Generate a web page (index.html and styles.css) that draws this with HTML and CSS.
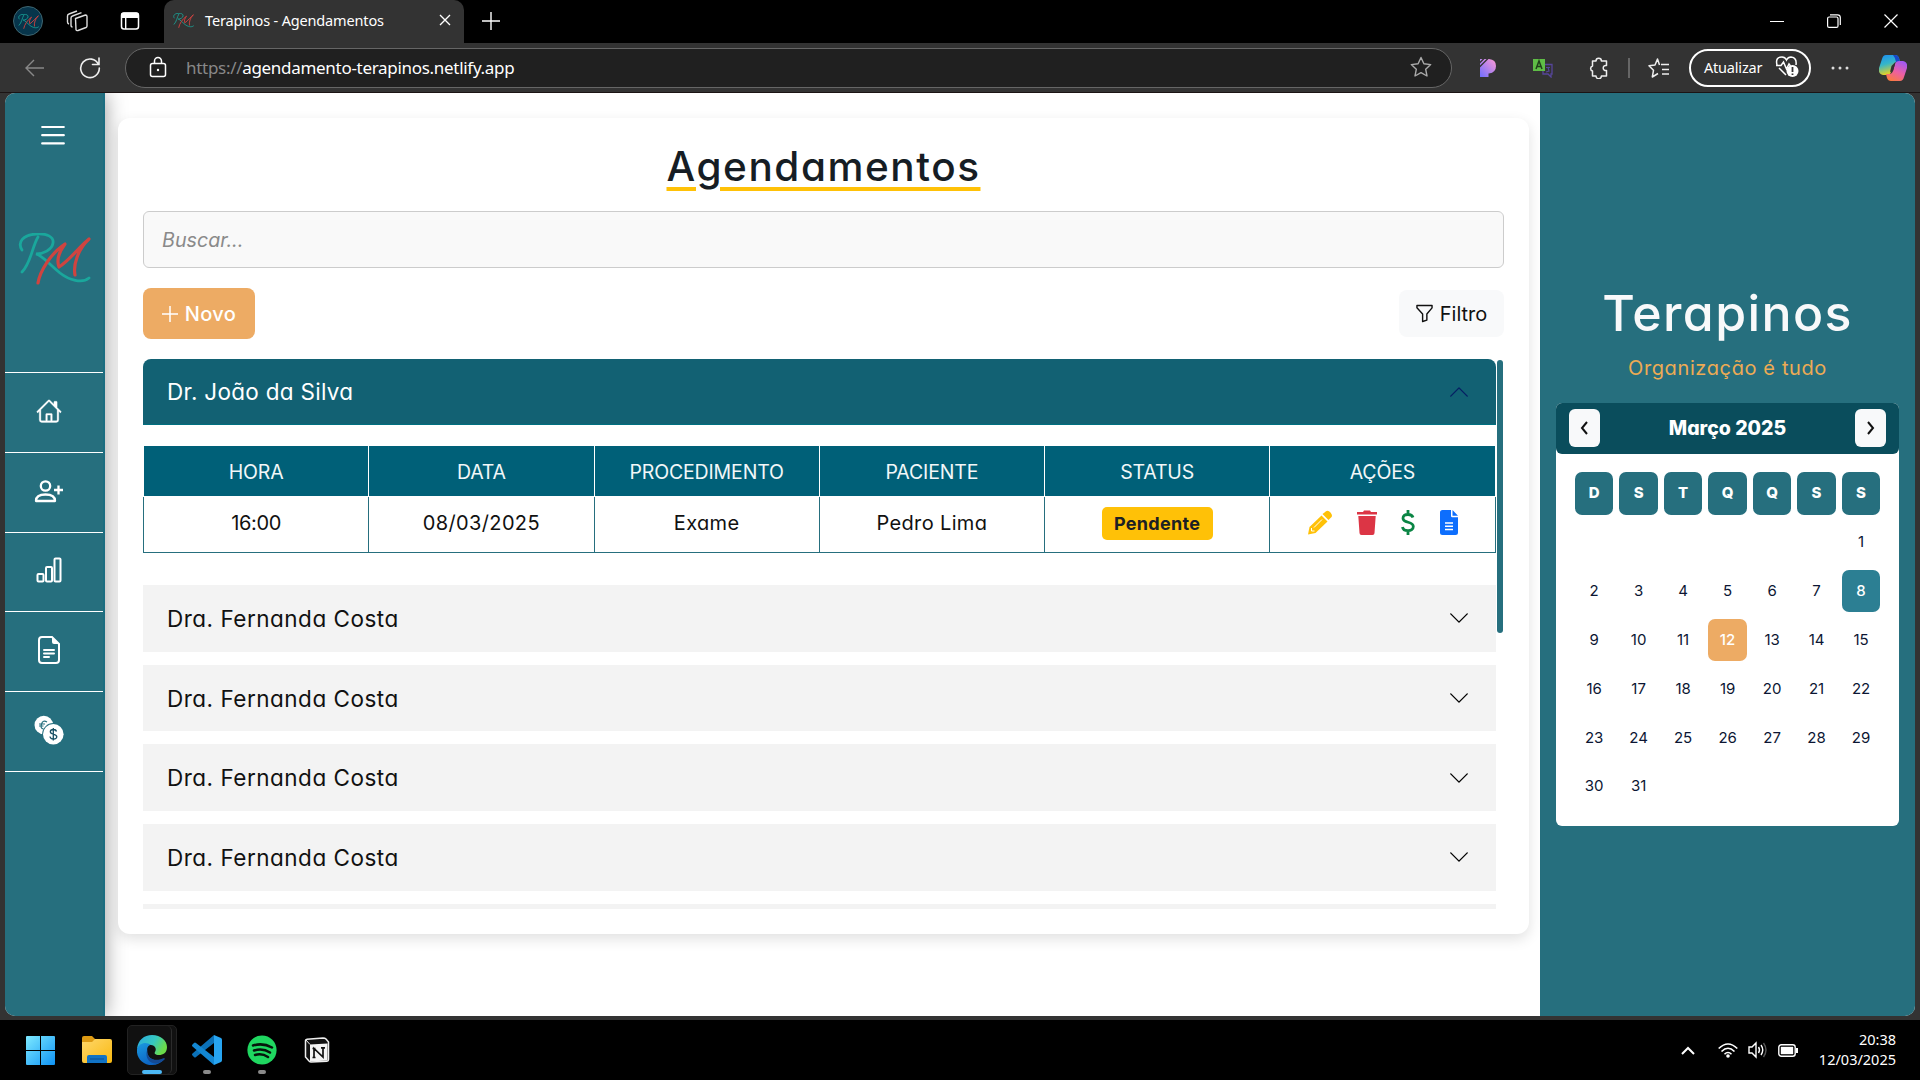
FILE: index.html
```html
<!DOCTYPE html>
<html lang="pt-BR">
<head>
<meta charset="utf-8">
<title>Terapinos - Agendamentos</title>
<link rel="stylesheet" href="styles.css">
</head>
<body>
<svg class="defs" aria-hidden="true">
  <defs>
    <symbol id="rm" viewBox="0 0 73 52" overflow="visible">
      <path d="M4 17C-1 9 5 2 18 1c11-1 18 3 17 9-1 7-10 11-17 11 7 2 13 10 24 19 9 7 22 11 29 5M20 4C14 14 13 30 4 39" fill="none" stroke="#1aa79c" stroke-width="2.8" stroke-linecap="round"/>
      <path d="M20 50C22 38 33 20 47 11 41 19 38 26 41 34 52 27 62 13 71 6 60 16 55 32 57 42" fill="none" stroke="#cf4440" stroke-width="3.2" stroke-linecap="round" stroke-linejoin="round"/>
    </symbol>
    <symbol id="down" viewBox="0 0 16 16"><path fill-rule="evenodd" d="M1.646 4.646a.5.5 0 0 1 .708 0L8 10.293l5.646-5.647a.5.5 0 0 1 .708.708l-6 6a.5.5 0 0 1-.708 0l-6-6a.5.5 0 0 1 0-.708z"/></symbol>
  </defs>
</svg>

<header class="tabs">
  <span class="avatar"><svg width="21" height="15"><use href="#rm"/></svg></span>
  <svg class="i-collections" width="22" height="22" viewBox="0 0 22 22" fill="none" stroke="#ddd" stroke-width="1.4" stroke-linejoin="round"><path d="M9.5 8.5l10-3.5q1.500 0 1.500 1.500v9.500q0 1-1 1.500l-8 3q-1.500.5-2-.8z"/><path d="M6.500 17q-1.500 0-1.500-2V8q0-1.500 1.500-2l9-3.300M3 14q-1.500-.5-1.500-2V6q0-1.500 1.500-2l8-3"/></svg>
  <svg class="i-panes" width="20" height="20" viewBox="0 0 20 20"><rect x="1.500" y="2" width="17" height="16" rx="2.500" fill="none" stroke="#fff" stroke-width="1.500"/><path d="M1 7V4q0-2.500 2.500-2.500h13Q19 1.500 19 4v3zM5 7h1.400v11H5z" fill="#fff"/></svg>
  <div class="tab">
    <svg width="21" height="15"><use href="#rm"/></svg>
    <span class="tab-title">Terapinos - Agendamentos</span>
    <svg width="12" height="12" viewBox="0 0 12 12" stroke="#fff" stroke-width="1.400"><path d="M1 1l10 10M11 1L1 11"/></svg>
  </div>
  <svg class="i-plus" width="18" height="18" viewBox="0 0 18 18" stroke="#fff" stroke-width="1.400"><path d="M9 0v18M0 9h18"/></svg>
  <div class="window">
    <svg width="14" height="14" viewBox="0 0 14 14" stroke="#fff"><path d="M0 7.500h14"/></svg>
    <svg width="14" height="14" viewBox="0 0 14 14" fill="none" stroke="#fff" stroke-width="1.200"><rect x=".6" y="3" width="10.400" height="10.400" rx="1.500"/><path d="M3 .8h7.500q2.800 0 2.800 2.800V11"/></svg>
    <svg width="14" height="14" viewBox="0 0 14 14" stroke="#fff" stroke-width="1.200"><path d="M.5.5l13 13M13.500.5l-13 13"/></svg>
  </div>
</header>

<nav class="toolbar">
  <svg class="i-back" width="19" height="18" viewBox="0 0 19 18" fill="none" stroke="#888" stroke-width="1.400"><path d="M19 9H1M9 1L1 9l8 8"/></svg>
  <svg class="i-reload" width="22" height="22" viewBox="0 0 22 22" fill="none" stroke="#eee" stroke-width="1.600"><path d="M19.500 7.500A9.300 9.300 0 1 0 20.300 11M20 1v6.500h-6.500" stroke-linecap="round"/></svg>
  <div class="address">
    <svg width="18" height="22" viewBox="0 0 18 22" fill="none" stroke="#fff" stroke-width="1.500"><rect x="1.500" y="7.500" width="15" height="13" rx="2"/><path d="M5.500 7.500V5a3.500 3.500 0 0 1 7 0v2.500"/><circle cx="9" cy="14" r="1.200" fill="#fff" stroke="none"/></svg>
    <span class="url"><i>https://</i>agendamento-terapinos.netlify.app</span>
    <svg class="i-star" width="22" height="22" viewBox="0 0 22 22" fill="none" stroke="#aaa" stroke-width="1.400" stroke-linejoin="round"><path d="M11 1.500l2.900 6.200 6.800.9-5 4.700 1.300 6.700-6-3.300-6 3.300 1.300-6.700-5-4.700 6.800-.9z"/></svg>
  </div>
  <svg class="i-p" width="18" height="20" viewBox="0 0 18 20"><defs><linearGradient id="pg" x1="1" x2="0" y2="1"><stop stop-color="#ff9ad5"/><stop offset="1" stop-color="#6f6dff"/></linearGradient></defs><path d="M1 1h9q7 .5 7 7t-7 7.500H9.500V19H1z" fill="url(#pg)"/><path d="M0 5.500L5.500 0M0 9.500L9.500 0" stroke="#333" stroke-width="1.300"/></svg>
  <svg class="i-translate" width="20" height="20" viewBox="0 0 20 20"><path d="M12 6.500h7V16h-1v3l-3-3h-5v-3.500" fill="none" stroke="#56469a" stroke-width="1.300"/><rect x="0" y="1" width="12" height="12" fill="#5fbd46"/><path d="M3 11l3-8 3 8M4 8.500h4" fill="none" stroke="#20401a" stroke-width="1.500"/><path d="M13 9.500h4M15 9l1 4-3 1" fill="none" stroke="#56469a" stroke-width="1.200"/></svg>
  <svg class="i-puzzle" width="20" height="22" viewBox="0 0 20 22" fill="none" stroke="#eee" stroke-width="1.500" stroke-linejoin="round"><path d="M3.500 4H7a2.700 2.700 0 0 1 5.400 0H17.500V8.500a2.600 2.600 0 1 0 0 5V19h-5.100a2.700 2.700 0 0 1-5.400 0H3.500v-5a2.600 2.600 0 0 1 0-5z"/></svg>
  <span class="divider"></span>
  <svg class="i-favs" width="22" height="22" viewBox="0 0 22 22" fill="none" stroke="#eee" stroke-width="1.500" stroke-linejoin="round"><path d="M13 7.500h8M14 12.500h7M14 17h7M11.500 8L9.500 2 7 8l-6 .8 4.500 4.500L4.300 20 10 16.500"/></svg>
  <div class="update"><span>Atualizar</span>
    <svg width="24" height="22" viewBox="0 0 24 22" fill="none" stroke="#fff" stroke-width="1.500"><path d="M2 9q-2-8 5-8 3 0 4.500 3Q13 1 16 1q6 .5 5 8M1 9.500h5L8.500 6l3 7 2.500-5 1.500 2M4 12l7 7"/><circle cx="17.500" cy="15" r="6" fill="#fff" stroke="none"/><path d="M17.500 11v5M17.500 17.500v1.500" stroke="#333" stroke-width="1.800"/></svg>
  </div>
  <svg class="i-dots" width="18" height="4" viewBox="0 0 18 4" fill="#ddd"><circle cx="2" cy="2" r="1.500"/><circle cx="9" cy="2" r="1.500"/><circle cx="16" cy="2" r="1.500"/></svg>
  <svg class="i-copilot" width="28" height="28" viewBox="0 0 28 28"><defs><linearGradient id="ca" x2=".3" y2="1"><stop stop-color="#1c8df2"/><stop offset=".5" stop-color="#35b6c8"/><stop offset="1" stop-color="#e8d021"/></linearGradient><linearGradient id="cb" x1=".7" x2=".2" y2="1"><stop stop-color="#a259f0"/><stop offset=".5" stop-color="#ec5fa4"/><stop offset="1" stop-color="#fb7b3b"/></linearGradient></defs><path d="M7 1h9q3 0 4 3l1 4h-3q-3 0-4 3l-2 7q-1 3-4 3H4q-5-1-4-7l3-9Q4 1 7 1z" fill="url(#ca)"/><path d="M14 1h2q3 0 4 3l1 4h-4q-1-5-3-7z" fill="#1748c8"/><path d="M21 27h-9q-3 0-4-3l-1-4h3q3 0 4-3l2-7q1-3 4-3h4q5 1 4 7l-3 9q-1 4-4 4z" fill="url(#cb)"/><path d="M12.500 12L11 18l3-1 2-7q-2.500 0-3.500 2z" fill="#333"/></svg>
</nav>

<main class="page">
  <aside class="sidebar">
    <svg class="burger" width="24" height="20" viewBox="0 0 24 20" stroke="#fff" stroke-width="2.200" stroke-linecap="round"><path d="M1.200 2h21.600M1.200 10.200h21.600M1.200 18.400h21.600"/></svg>
    <svg class="logo" width="73" height="52"><use href="#rm"/></svg>
    <ul class="menu">
      <li><svg width="26" height="26" viewBox="0 0 16 16"><path d="M8.707 1.500a1 1 0 0 0-1.414 0L.646 8.146a.5.5 0 0 0 .708.708L2 8.207V13.500A1.500 1.500 0 0 0 3.500 15h9a1.500 1.500 0 0 0 1.500-1.500V8.207l.646.647a.5.5 0 0 0 .708-.708L13 5.793V2.500a.5.5 0 0 0-.5-.5h-1a.5.5 0 0 0-.5.5v1.293zM13 7.207V13.500a.5.5 0 0 1-.5.5H10v-4a.5.5 0 0 0-.5-.5h-3a.5.5 0 0 0-.5.500v4H3.500a.5.5 0 0 1-.5-.5V7.207l5-5zM7 14v-3.500h2V14z" stroke="#fff" stroke-width=".2"/></svg></li>
      <li><svg width="30" height="24" viewBox="0 0 30 24" fill="none" stroke="#fff" stroke-width="2.300" stroke-linejoin="round"><circle cx="11.500" cy="7" r="4.700"/><path d="M2 22q0-6.500 9.500-6.500T21 22zM24.500 6.500v9M20 11h9"/></svg></li>
      <li><svg width="26" height="26" viewBox="0 0 26 26" fill="none" stroke="#fff" stroke-width="2"><rect x="1.500" y="17" width="6" height="7.500" rx="1"/><rect x="10" y="10" width="6" height="14.500" rx="1"/><rect x="18.500" y="1.500" width="6" height="23" rx="1"/></svg></li>
      <li><svg width="22" height="28" viewBox="0 0 22 28" fill="none" stroke="#fff" stroke-width="2"><path d="M14 1H4Q1 1 1 4v20q0 3 3 3h14q3 0 3-3V8z"/><path d="M14 1v5q0 2 2 2h5z" fill="#fff" stroke="none"/><path d="M6 14h10M6 17.500h10M6 21h5" stroke-linecap="round"/></svg></li>
      <li><svg width="30" height="30" viewBox="0 0 30 30"><circle cx="9.800" cy="10" r="9.300" fill="#fff"/><circle cx="19.300" cy="19.300" r="11.200" fill="#266f7e"/><circle cx="19.300" cy="19.300" r="10.300" fill="#fff"/><path d="M13 7Q9 4.500 7.500 9T9.500 14M5 9h6M5 11h4.500" fill="none" stroke="#266f7e" stroke-width="1.200"/><path d="M22.500 16.500q-.5-2-3.200-2-3 0-3 2.300c0 3.500 6.500 1.500 6.500 5 0 3.200-6.500 3-6.800-.3M19.300 13v12.500" fill="none" stroke="#174f63" stroke-width="1.300"/></svg></li>
    </ul>
  </aside>

  <section class="content">
    <div class="card">
      <h1><span>Agendamentos</span></h1>
      <div class="search">Buscar...</div>
      <div class="actions">
        <button class="new"><svg width="16" height="16" viewBox="0 0 16 16" stroke="#fff" stroke-width="1.500"><path d="M8 0v16M0 8h16"/></svg><span>Novo</span></button>
        <button class="filter"><svg width="17" height="19" viewBox="0 0 18 19" fill="none" stroke="#111" stroke-width="1.500" stroke-linejoin="round"><path d="M1 1h16v2.500l-5.500 6.500v6.500L7 18v-8L1 3.500z"/></svg><span>Filtro</span></button>
      </div>
      <div class="scroller">
        <div class="list">
          <div class="item open"><span>Dr. João da Silva</span><svg width="22" height="22"><use href="#down"/></svg></div>
          <table>
            <thead><tr><th>HORA</th><th>DATA</th><th>PROCEDIMENTO</th><th>PACIENTE</th><th>STATUS</th><th>AÇÕES</th></tr></thead>
            <tbody><tr><td class="time">16:00</td><td>08/03/2025</td><td>Exame</td><td>Pedro Lima</td><td><span class="badge">Pendente</span></td>
              <td><div class="ops">
                <svg width="25" height="25" viewBox="0 0 25 25"><path d="M17.500 2.500q3-3.500 6 0t0 5.500l-2 2-6-6z" fill="#ffc107"/><path d="M14.500 5.500l6 6L8.500 23 1 24.500 2.500 17z" fill="#ffc107"/><path d="M15 9.500L7 17.500M4.500 18v3h3" stroke="#fff" stroke-width="1" fill="none"/></svg>
                <svg width="20" height="25" viewBox="0 0 20 25" fill="#dc3545"><path d="M0 2h6l1-1.500h6L14 2h6v2.500H0zM1.300 6h17.400l-1.200 17q0 2-2 2h-11q-2 0-2-2z"/></svg>
                <svg width="14" height="25" viewBox="0 0 14 25" fill="none" stroke="#0a8544" stroke-width="2.800"><path d="M12 7.500Q11 4.500 7 4.500q-5 0-5 3.700c0 5.300 10.300 2.800 10.300 8.300 0 5.500-10 5.500-10.800.5M7 0v4.500M7 20.500V25"/></svg>
                <svg width="18" height="25" viewBox="0 0 18 25"><path d="M2.500 0H11v6q0 1.200 1.200 1.200H18V22.500Q18 25 15.500 25h-13Q0 25 0 22.500v-20Q0 0 2.500 0zM12.500 0L18 5.800h-5.500z" fill="#0d6efd"/><path d="M5 13h8M5 16.200h8M5 19.500h8" stroke="#fff" stroke-width="1.500"/></svg>
              </div></td></tr></tbody>
          </table>
          <div class="item"><span>Dra. Fernanda Costa</span><svg width="22" height="22"><use href="#down"/></svg></div>
          <div class="item"><span>Dra. Fernanda Costa</span><svg width="22" height="22"><use href="#down"/></svg></div>
          <div class="item"><span>Dra. Fernanda Costa</span><svg width="22" height="22"><use href="#down"/></svg></div>
          <div class="item"><span>Dra. Fernanda Costa</span><svg width="22" height="22"><use href="#down"/></svg></div>
          <div class="item"></div>
        </div>
        <div class="track"><div class="thumb"></div></div>
      </div>
    </div>
  </section>

  <aside class="panel">
    <h2>Terapinos</h2>
    <p>Organização é tudo</p>
    <div class="calendar">
      <div class="cal-head">
        <button><svg width="9" height="14" viewBox="0 0 9 14"><path d="M7 1L2 7l5 6"/></svg></button>
        <strong>Março 2025</strong>
        <button><svg width="9" height="14" viewBox="0 0 9 14"><path d="M2 1l5 6-5 6"/></svg></button>
      </div>
      <div class="week"><b>D</b><b>S</b><b>T</b><b>Q</b><b>Q</b><b>S</b><b>S</b></div>
      <div class="days">
        <span class="first">1</span>
        <span>2</span><span>3</span><span>4</span><span>5</span><span>6</span><span>7</span><span class="booked">8</span>
        <span>9</span><span>10</span><span>11</span><span class="today">12</span><span>13</span><span>14</span><span>15</span>
        <span>16</span><span>17</span><span>18</span><span>19</span><span>20</span><span>21</span><span>22</span>
        <span>23</span><span>24</span><span>25</span><span>26</span><span>27</span><span>28</span><span>29</span>
        <span>30</span><span>31</span>
      </div>
    </div>
  </aside>
</main>

<footer class="taskbar">
  <svg class="t-win" width="29" height="29" viewBox="0 0 29 29"><defs><linearGradient id="wg" x2="1" y2="1"><stop stop-color="#7eeaff"/><stop offset="1" stop-color="#0f93f5"/></linearGradient></defs><path d="M0 1q0-1 1-1h13v14H0zM15 0h13q1 0 1 1v13H15zM0 15h14v14H1q-1 0-1-1zM15 15h14v13q0 1-1 1H15z" fill="url(#wg)"/></svg>
  <svg class="t-folder" width="30" height="28" viewBox="0 0 30 28"><defs><linearGradient id="fg" x2="1" y2="1"><stop stop-color="#ffd76a"/><stop offset="1" stop-color="#f9b911"/></linearGradient></defs><path d="M0 2q0-2 2-2h8l3 3v6H0z" fill="#dd9a13"/><path d="M0 6h10l3-3h15q2 0 2 2v20q0 2-2 2H2q-2 0-2-2z" fill="url(#fg)"/><path d="M5 27v-6q0-2 2-2h16q2 0 2 2v6z" fill="#1173c5"/><path d="M8 23h14" stroke="#0a4f93"/></svg>
  <div class="t-edge"><div>
    <svg width="30" height="30" viewBox="0 0 30 30"><defs><linearGradient id="ea" x2="1" y2=".4"><stop stop-color="#2aa8e0"/><stop offset=".6" stop-color="#36c9c0"/><stop offset="1" stop-color="#6bdc4a"/></linearGradient><linearGradient id="eb" x2=".6" y2="1"><stop stop-color="#1b9ae0"/><stop offset="1" stop-color="#0b5fc0"/></linearGradient></defs><path d="M0 14C1 5 7 0 15 0c9 0 15 6 15 12 0 6-4 8-8 8-4 0-5-2-4-3 2-3 0-7-4-7C7 9 2 10 0 14z" fill="url(#ea)"/><path d="M0 14C2 8 9 6 14 10c-4 0-5 6-3 10 3 6 10 6 16 4-3 4-7 6-12 6C6 30-1 23 0 14z" fill="url(#eb)"/><path d="M11 13c-3 9 5 15 16 10 1 0 1 1 0 2-9 8-22 1-16-12z" fill="#144a94"/></svg>
    <em></em></div></div>
  <div class="t-app t-code"><svg width="30" height="30" viewBox="0 0 30 30"><path d="M22 8L4 22q-1 1-2 0l-1.500-1.500q-1-1 0-2L22 0z" fill="#0b71b8"/><path d="M22 22L4 8Q3 7 2 8L.5 9.500q-1 1 0 2L22 30z" fill="#1387d2"/><path d="M22 0l7 3q1 .5 1 2v20q0 1.500-1 2l-7 3z" fill="#27a5f2"/></svg><em></em></div>
  <div class="t-app t-spot"><svg width="30" height="30" viewBox="0 0 30 30"><circle cx="15" cy="15" r="14.600" fill="#1fd760"/><path d="M6 10.500q10-3 19 2M7 15.500q9-2.500 16 2M8 20q7-2 13 2" fill="none" stroke="#06150b" stroke-width="2.500" stroke-linecap="round"/></svg><em></em></div>
  <svg class="t-notion" width="26" height="26" viewBox="0 0 26 26"><path d="M1.500 3.500q0-1 1.500-1.200L19 1q2 0 3 1l2.500 3v17.500q0 1.700-1.500 1.700L7 25q-1 0-2-1l-3.500-4z" fill="#111" stroke="#eee" stroke-width="1.500"/><path d="M6 7.500l17.500-1v17L6 24.500z" fill="#f4f4f4"/><path d="M2 3l4 4.500" stroke="#eee"/><path d="M10 20.500v-9l9 8.500v-9M8.500 11.500h3M17 10.800h4M8.500 20.500h3" stroke="#111" stroke-width="1.700" fill="none"/></svg>
  <div class="tray">
    <svg class="y-up" width="14" height="9" viewBox="0 0 14 9" fill="none" stroke="#fff" stroke-width="2"><path d="M1 8l6-6 6 6"/></svg>
    <svg class="y-wifi" width="20" height="15" viewBox="0 0 20 15" fill="none" stroke="#fff" stroke-width="1.600"><path d="M.7 5.500q9.300-9 18.600 0M3.500 8.500q6.500-6.500 13 0M6.500 11.200q3.500-3.500 7 0"/><circle cx="10" cy="13" r="1.800" fill="#fff" stroke="none"/></svg>
    <svg class="y-vol" width="20" height="18" viewBox="0 0 20 18" fill="none" stroke="#fff" stroke-width="1.400"><path d="M1 6h3l4-4v14l-4-4H1zM10.500 6q2 3 0 6M13 4q3.500 5 0 10"/><path d="M15.500 2q5 7 0 14" stroke="#555"/></svg>
    <svg class="y-bat" width="20" height="13" viewBox="0 0 20 13"><rect x=".8" y=".8" width="16.400" height="11.400" rx="2.500" fill="none" stroke="#fff" stroke-width="1.400"/><rect x="2.800" y="2.800" width="12.400" height="7.400" fill="#fff"/><path d="M18 4h2v5h-2z" fill="#fff"/></svg>
    <div class="clock">20:38<br>12/03/2025</div>
  </div>
</footer>
</body>
</html>
```
FILE: styles.css
```css
* { box-sizing: border-box; }
body {
  margin: 0; width: 1920px; height: 1080px; overflow: hidden;
  display: flex; flex-direction: column; background: #333;
  font-family: Inter, "Open Sans", sans-serif; font-feature-settings: "cv11";
}
svg { display: block; flex: none; }
h1, h2, p, ul { margin: 0; padding: 0; font-weight: 400; list-style: none; }
button { border: 0; padding: 0; font: inherit; font-feature-settings: inherit; letter-spacing: inherit; }
.defs { position: absolute; width: 0; height: 0; }

/* browser chrome */
.tabs { height: 43px; padding-bottom: 1px; background: #000; display: flex; align-items: center; flex: none; font-family: "Noto Sans", sans-serif; }
.avatar { width: 30px; height: 30px; margin-left: 13px; border-radius: 50%; background: #07354b; border: 1px solid #3f6670; display: grid; place-items: center; }
.i-collections { margin-left: 23px; }
.i-panes { margin-left: 32px; }
.tab { width: 300px; height: 43px; margin: 1px 0 0 24px; padding: 0 13px 3px 9px; background: #333; border-radius: 10px 10px 0 0; display: flex; align-items: center; color: #fff; font-size: 14.500px; letter-spacing: -.16px; }
.tab-title { margin-left: 11px; flex: 1; white-space: nowrap; }
.i-plus { margin-left: 18px; }
.window { margin-left: auto; margin-right: 22px; display: flex; gap: 43px; }

.toolbar { height: 50px; background: #333; display: flex; align-items: center; flex: none; border-bottom: 1px solid #1b1414; font-family: "Noto Sans", sans-serif; }
.i-back { margin-left: 25px; }
.i-reload { margin-left: 35px; }
.address { width: 1327px; height: 40px; margin-left: 24px; padding: 0 19px 1px 23px; border: 1px solid #666; border-radius: 20px; background: #202020; display: flex; align-items: center; }
.url { margin-left: 19px; flex: 1; color: #fff; font-size: 17px; letter-spacing: -.3px; }
.url i { color: #888; font-style: normal; }
.i-p { margin-left: 27px; }
.i-translate { margin-left: 36px; }
.i-puzzle { margin-left: 36px; }
.divider { width: 2px; height: 20px; margin-left: 19px; background: #666; }
.i-favs { margin-left: 18px; }
.update { width: 122px; height: 38px; margin-left: 19px; padding: 0 10px 1px 13px; border: 2px solid #fff; border-radius: 19px; display: flex; align-items: center; justify-content: space-between; color: #fff; font-size: 14.500px; letter-spacing: -.2px; }
.i-dots { margin-left: 20px; }
.i-copilot { margin-left: 30px; }

/* sidebar */
.page { height: 923px; margin: 0 5px 4px; border-radius: 10px; overflow: hidden; background: #fff; display: flex; flex: none; }
.sidebar { width: 100px; flex: none; background: #266f7e; border-right: 2px solid #1b6d80; box-shadow: 0 0 20px rgba(0,0,0,.4); display: flex; flex-direction: column; }
.burger { margin: 32px 0 0 36px; }
.logo { margin: 88px 0 0 13px; }
.menu { margin-top: 87px; border-top: 1px solid #fff; }
.menu li { height: 79.800px; border-bottom: 1px solid #fff; display: grid; place-items: center; padding: 0 10px 3px 0; fill: #fff; }

/* schedule card */
.content { width: 1435px; flex: none; padding: 25px 11px 0 13px; }
.card { position: relative; height: 816px; padding: 26px 25px 0 25px; background: #fff; border-radius: 12px; box-shadow: 0 5px 14px rgba(0,0,0,.12); }
h1 { height: 59px; line-height: 46px; text-align: center; font-size: 40.500px; font-weight: 500; letter-spacing: 1.540px; color: #161d24; text-decoration: underline; text-decoration-color: #ffc107; text-decoration-thickness: 4px; text-underline-offset: 6px; }
.search { height: 57px; margin-top: 8px; padding-left: 18px; border: 1px solid #ccc; border-radius: 6px; background: #f9f9f9; color: #8a8a8a; font-size: 19.700px; font-style: italic; line-height: 56px; }
.actions { margin-top: 20px; display: flex; align-items: center; justify-content: space-between; font-size: 20px; }
.new { width: 112px; height: 51px; border-radius: 8px; background: #edab64; color: #fff; display: flex; align-items: center; justify-content: center; gap: 7px; font-weight: 500; letter-spacing: .4px; }
.filter { width: 105px; height: 47px; border-radius: 8px; background: #f8f9fa; color: #111; display: flex; align-items: center; justify-content: center; gap: 7px; }
.scroller { margin-top: 20px; height: 550px; display: flex; overflow: hidden; }
.list { width: 1353px; overflow: hidden; flex: none; }
.track { width: 8px; padding: 1px 1px 0; }
.thumb { height: 273px; border-radius: 3px; background: #266f7e; }
.item { height: 66.700px; margin-bottom: 13px; padding: 0 26px 0 24px; background: #f3f3f3; display: flex; align-items: center; justify-content: space-between; font-size: 22.500px; letter-spacing: .5px; color: #111; }
.item.open { height: 66px; margin: 0 0 20px; letter-spacing: .3px; border-radius: 8px 8px 0 0; border-bottom: 1px solid #007080; background: #126173; color: #fff; }
.item.open svg { transform: rotate(180deg); fill: #061f63; }
table { width: 1352.500px; table-layout: fixed; border-collapse: collapse; margin-bottom: 32px; font-size: 20px; letter-spacing: .36px; text-align: center; color: #111; }
th { height: 51px; padding: 1px 0 0; background: #006078; color: #f2f7f8; font-weight: 400; font-size: 19.500px; letter-spacing: -.15px; border: 1px solid #fff; }
td { height: 56px; padding: 0 0 4px; border: 1px solid #266f7e; }
.time { letter-spacing: -.4px; }
.badge { display: inline-flex; align-items: center; justify-content: center; width: 111px; height: 33px; margin-top: 1px; border-radius: 5px; background: #ffc107; font-size: 18px; letter-spacing: .28px; font-weight: 700; color: #1c2024; }
.ops { display: flex; align-items: center; justify-content: center; gap: 24.500px; }

/* calendar panel */
.panel { width: 375px; background: #266f7e; padding: 189px 16px 0; text-align: center; }
h2 { height: 66px; line-height: 62px; font-size: 50px; font-weight: 500; letter-spacing: 1.400px; color: #f8f9fa; }
.panel p { height: 55px; line-height: 41px; font-size: 20px; letter-spacing: .62px; color: #edab54; }
.calendar { width: 343px; height: 423px; background: #fff; border-radius: 6px; }
.cal-head { height: 51px; padding: 0 13px 1px; border-radius: 6px; background: #0a4d5c; display: flex; align-items: center; justify-content: space-between; color: #fff; font-size: 19.500px; }
.cal-head strong { font-weight: 800; }
.cal-head button { width: 31px; height: 38px; border-radius: 6px; background: #f8f9fa; display: grid; place-items: center; }
.cal-head svg { fill: none; stroke: #111; stroke-width: 2; }
.week, .days { display: grid; grid-template-columns: repeat(7, 38.300px); column-gap: 6.200px; padding-left: 19px; }
.week { margin-top: 18px; }
.week b { height: 43px; padding-bottom: 2px; border-radius: 7px; background: #266f7e; color: #fff; font-size: 15px; font-weight: 800; display: grid; place-items: center; }
.days { margin-top: 6px; row-gap: 6.900px; font-size: 15px; color: #0c1633; }
.days span { height: 42px; padding-bottom: 1px; border-radius: 7px; display: grid; place-items: center; }
.days .first { grid-column: 7; }
.days .booked { background: #2c7f93; color: #fff; font-weight: 500; }
.days .today { background: #edab64; color: #fff; font-weight: 500; }

/* system taskbar */
.taskbar { height: 60px; background: #000; display: flex; align-items: center; flex: none; font-family: "Noto Sans", sans-serif; }
.taskbar em { display: block; border-radius: 2px; }
.t-win { margin-left: 26px; }
.t-folder { margin-left: 27px; }
.t-edge { margin-left: 15px; width: 50px; height: 50px; border: 1px solid #222; border-radius: 5px; background: #111; }
.t-edge > div { width: 44px; height: 48px; padding-top: 9px; border-right: 1px solid #2c2c2c; border-radius: 5px; }
.t-edge svg { margin-left: 9px; }
.t-edge em { width: 20px; height: 4px; margin: 5px 0 0 14px; background: #4cb8f5; }
.t-app { height: 50px; padding-top: 10px; }
.t-app em { width: 8px; height: 4px; margin: 5px auto 0; background: #8a8a8a; }
.t-code { margin-left: 15px; }
.t-spot { margin-left: 25px; }
.t-notion { margin-left: 27px; }
.tray { margin-left: auto; margin-right: 24px; display: flex; align-items: center; color: #fff; }
.y-wifi { margin-left: 23px; }
.y-vol { margin-left: 10px; }
.y-bat { margin-left: 10px; }
.clock { width: 98px; padding-bottom: 2px; text-align: right; font-size: 14.500px; line-height: 20px; }
```
